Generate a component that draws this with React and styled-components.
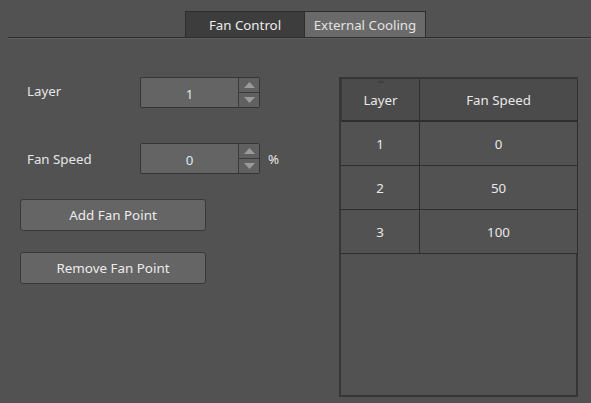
import styled, { createGlobalStyle } from 'styled-components';

const Global = createGlobalStyle`
    html, body {
        margin: 0;
        padding: 0;
        background: #525252;
    }
    body {
        font-family: "Noto Sans", "DejaVu Sans", sans-serif;
        font-size: 13px;
        color: #e6e6e6;
    }
`;

const Page = styled.div`
    width: 591px;
    height: 403px;
    background: #525252;
    display: flex;
    flex-direction: column;
    overflow: hidden;
`;

const TabBar = styled.div`
    display: flex;
    justify-content: flex-start;
    padding: 11px 0 0 177px;
    margin-left: 8px;
    border-bottom: 1px solid #2e2e2e;
    box-shadow: 0 1px 0 #5c5c5c;
`;

const Tab = styled.div`
    width: ${(p) => p.$w}px;
    height: 26px;
    display: flex;
    align-items: center;
    justify-content: center;
    background: ${(p) => (p.$active ? '#3d3d3d' : '#6a6a6a')};
    border: 1px solid #2e2e2e;
    border-bottom: none;
    border-left: ${(p) => (p.$active ? '1px solid #2e2e2e' : 'none')};
    color: ${(p) => (p.$active ? '#ececec' : '#e2e2e2')};
    box-sizing: border-box;
    font-size: 13.3px;
`;

const Body = styled.div`
    display: flex;
    padding: 39px 13px 0 20px;
`;

const Left = styled.div`
    width: 319px;
    display: flex;
    flex-direction: column;
`;

const Row = styled.div`
    display: flex;
    align-items: center;
    height: 31px;
    margin-bottom: ${(p) => p.$mb || 0}px;
`;

const Label = styled.div`
    width: 120px;
    padding-left: 7px;
    box-sizing: border-box;
    font-size: 13.3px;
    margin-top: ${(p) => p.$mt || 0}px;
`;

const Spin = styled.div`
    display: flex;
    width: 120px;
    height: 31px;
    border: 1px solid #353535;
    border-radius: 2px;
    box-sizing: border-box;
    background: #646464;
`;

const SpinValue = styled.div`
    flex: 1;
    display: flex;
    align-items: center;
    justify-content: center;
    color: #dfe8f2;
    font-size: 13.3px;
    padding-top: 3px;
`;

const SpinButtons = styled.div`
    width: 20px;
    display: flex;
    flex-direction: column;
    border-left: 1px solid #3a3a3a;
`;

const Arrow = styled.div`
    flex: 1;
    display: flex;
    align-items: center;
    justify-content: center;
    background: #606060;
    & + & {
        border-top: 1px solid #3a3a3a;
    }
`;

const Unit = styled.span`
    margin-left: 8px;
    font-size: 13.3px;
`;

const Button = styled.button`
    width: 186px;
    height: 32px;
    background: #656565;
    border: 1px solid #383838;
    border-radius: 3px;
    color: #ececec;
    font-family: "Noto Sans", "DejaVu Sans", sans-serif;
    font-size: 13.4px;
    padding: 0;
    margin-bottom: ${(p) => p.$mb || 0}px;
`;

const Table = styled.div`
    width: 239px;
    height: 320px;
    margin-top: 0;
    border: 2px solid #363636;
    box-sizing: border-box;
    background: #525252;
    display: flex;
    flex-direction: column;
`;

const TRow = styled.div`
    display: grid;
    grid-template-columns: 79px 158px;
    height: ${(p) => p.$h}px;
    width: ${(p) => (p.$head ? 237 : 235)}px;
`;

const Cell = styled.div`
    display: flex;
    align-items: center;
    justify-content: center;
    background: ${(p) => (p.$head ? '#4b4b4b' : '#525252')};
    border-right: 1px solid #2e2e2e;
    border-bottom: ${(p) => (p.$head ? 2 : 1)}px solid #2e2e2e;
    border-left: ${(p) => (p.$head && p.$first ? '1px solid #3a3a3a' : 'none')};
    box-sizing: border-box;
    color: #e8e8e8;
    font-size: 13.3px;
    position: relative;
`;

const SortMark = styled.span`
    position: absolute;
    top: 1px;
    left: 50%;
    transform: translateX(-50%);
    width: 0;
    height: 0;
    border-left: 4px solid transparent;
    border-right: 4px solid transparent;
    border-bottom: 3px solid #3f3f3f;
`;

const Triangle = ({ up }) => (
    <svg width="11" height="6" viewBox="0 0 11 6">
        <polygon points={up ? '0,6 5.5,0 11,6' : '0,0 5.5,6 11,0'} fill="#9a9a9a" />
    </svg>
);

const SpinBox = ({ value }) => (
    <Spin>
        <SpinValue>{value}</SpinValue>
        <SpinButtons>
            <Arrow>
                <Triangle up />
            </Arrow>
            <Arrow>
                <Triangle />
            </Arrow>
        </SpinButtons>
    </Spin>
);

const rows = [
    { layer: 1, speed: 0 },
    { layer: 2, speed: 50 },
    { layer: 3, speed: 100 },
];

const App = () => {
    return (
        <>
            <Global />
            <Page>
                <TabBar>
                    <Tab $active $w={120}>Fan Control</Tab>
                    <Tab $w={121}>External Cooling</Tab>
                </TabBar>
                <Body>
                    <Left>
                        <Row $mb={35}>
                            <Label $mt={-4}>Layer</Label>
                            <SpinBox value="1" />
                        </Row>
                        <Row $mb={25}>
                            <Label $mt={0}>Fan Speed</Label>
                            <SpinBox value="0" />
                            <Unit>%</Unit>
                        </Row>
                        <Button $mb={21}>Add Fan Point</Button>
                        <Button>Remove Fan Point</Button>
                    </Left>
                    <Table>
                        <TRow $head $h={43}>
                            <Cell $head $first>
                                <SortMark />
                                Layer
                            </Cell>
                            <Cell $head>Fan Speed</Cell>
                        </TRow>
                        {rows.map((el) => (
                            <TRow key={el.layer} $h={44}>
                                <Cell>{el.layer}</Cell>
                                <Cell>{el.speed}</Cell>
                            </TRow>
                        ))}
                    </Table>
                </Body>
            </Page>
        </>
    );
};

export default App;
